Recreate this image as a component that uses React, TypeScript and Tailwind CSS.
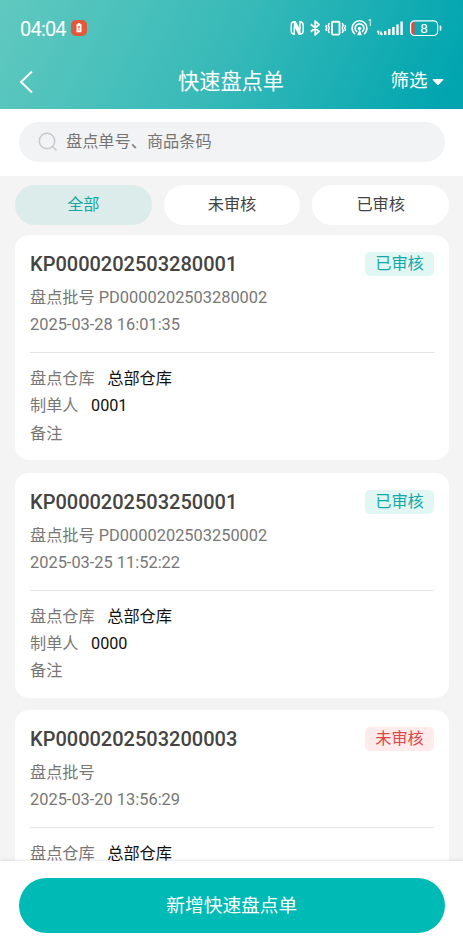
import React, { useState } from 'react';
import { clsx } from 'clsx';

type Order = {
  code: string;
  batch: string;
  createdAt: string;
  warehouse: string;
  creator: string;
  remark: string;
  approved: boolean;
};

const orders: Order[] = [
  {
    code: 'KP0000202503280001',
    batch: 'PD0000202503280002',
    createdAt: '2025-03-28 16:01:35',
    warehouse: '总部仓库',
    creator: '0001',
    remark: '',
    approved: true,
  },
  {
    code: 'KP0000202503250001',
    batch: 'PD0000202503250002',
    createdAt: '2025-03-25 11:52:22',
    warehouse: '总部仓库',
    creator: '0000',
    remark: '',
    approved: true,
  },
  {
    code: 'KP0000202503200003',
    batch: '',
    createdAt: '2025-03-20 13:56:29',
    warehouse: '总部仓库',
    creator: '0000',
    remark: '',
    approved: false,
  },
];

const tabs = ['全部', '未审核', '已审核'];

function StatusIcons() {
  return (
    <svg width="156" height="22" viewBox="0 0 156 22" fill="none" stroke="white">
      {/* NFC */}
      <path d="M4.200 4.700C2 4.900 1.200 6 1.200 8V14C1.200 16 2 17.100 4.200 17.300V9.500M10 12.500V4.700C12.300 4.900 13.100 6 13.100 8V14C13.100 16 12.300 17.100 10 17.300" strokeWidth="1.400" />
      <path d="M3.800 4H5.600L10.500 13V18H8.800L3.800 9Z" fill="white" stroke="none" />
      {/* Bluetooth */}
      <path d="M20.800 7.300L29 14.400L25.200 17.800V4.200L29 7.600L20.800 14.700" strokeWidth="1.800" strokeLinejoin="round" />
      {/* Vibrate */}
      <rect x="42" y="4.800" width="7.500" height="12.800" rx="1" strokeWidth="1.900" />
      <path d="M39.300 6L38.300 8.500L39.300 11L38.300 13.500L39.300 16M36.600 8L36 9.500L36.800 11L36 12.500L36.600 14M52.200 6L53.200 8.500L52.200 11L53.200 13.500L52.200 16M54.900 8L55.500 9.500L54.700 11L55.500 12.500L54.900 14" strokeWidth="1.500" />
      {/* Hotspot */}
      <path d="M64.500 16.600A7.400 7.400 0 1 1 74.500 16.600M66.500 14.400A4.400 4.400 0 1 1 72.500 14.400" strokeWidth="1.700" strokeLinecap="round" />
      <circle cx="69.500" cy="11.500" r="1.800" fill="white" stroke="none" />
      <path d="M69.500 12L71.800 18.300H67.200Z" fill="white" stroke="none" />
      <text x="77.500" y="9" fontSize="8.500" fill="white" stroke="none">1</text>
      {/* Signal */}
      <path d="M88.600 17.500V13.800M87.200 15.300L88.600 13.800M91 14.500V18M91 18L92.500 16.400" strokeWidth="1.400" />
      <path d="M95.200 18V14M99.300 18V12M103.400 18V10M107.500 18V7.500M111.600 18V4.500" strokeWidth="2.400" strokeLinecap="butt" />
      {/* Battery */}
      <path d="M124.500 4V18H123.500A2.800 2.800 0 0 1 121 15.200V7A2.800 2.800 0 0 1 123.500 4Z" fill="#e8473a" stroke="none" />
      <rect x="120.600" y="3.800" width="27" height="14.700" rx="4" strokeWidth="1.200" />
      <path d="M150.500 9.200V13" strokeWidth="1.600" strokeLinecap="round" />
      <text x="134" y="16" fontSize="13.500" textAnchor="middle" fill="white" stroke="none">8</text>
    </svg>
  );
}

function Header() {
  return (
    <header className="h-[109px] shrink-0 bg-[linear-gradient(115deg,#60c9bf_0%,#36b9b8_50%,#00a5b0_96%)] text-white">
      <div className="flex h-14 items-center justify-between pr-[17px] pl-5">
        <div className="flex items-center gap-[5px]">
          <span className="pt-px text-[20px] tracking-[-0.8px]">04:04</span>
          <svg width="16" height="16" viewBox="0 0 16 16">
            <rect width="16" height="16" rx="5" fill="#e4573b" />
            <path d="M6.800 3h2.400v1.200h1.300v8H5.500v-8h1.300z" fill="white" />
            <path d="M8 6v2.500M8 9.500v1" stroke="#e4573b" strokeWidth="1.300" />
          </svg>
        </div>
        <StatusIcons />
      </div>
      <div className="grid h-[52px] grid-cols-[1fr_auto_1fr] items-center pr-[19.5px] pl-[18.5px]">
        <svg width="14" height="24" viewBox="0 0 14 24" fill="none" stroke="white" strokeWidth="1.900">
          <path d="M13 1.500L2 12L13 22.500" />
        </svg>
        <h1 className="text-[21.2px]">快速盘点单</h1>
        <button className="flex items-center gap-1 justify-self-end text-[18.500px]">
          筛选
          <svg width="12" height="7" viewBox="0 0 12 7" fill="white">
            <path d="M1 0.500H11L6 6Z" stroke="white" strokeLinejoin="round" />
          </svg>
        </button>
      </div>
    </header>
  );
}

function Field({ label, value }: { label: string; value: string }) {
  return (
    <div className="flex gap-[12.5px]">
      <span className="text-[#777]">{label}</span>
      <span className="text-[#111]">{value}</span>
    </div>
  );
}

function OrderCard({ order }: { order: Order }) {
  return (
    <article className="h-[225px] shrink-0 rounded-[14px] bg-white px-[15px] pt-[15px] text-[16.2px] leading-[27.3px]">
      <div className="flex h-[28px] items-center justify-between">
        <h2 className="pt-[2px] text-[20px] font-medium text-[#444]">{order.code}</h2>
        <span
          className={clsx(
            'h-6 w-[69px] rounded-[5px] text-center leading-6',
            order.approved ? 'bg-[#e2f6f4] text-[#12aaa8]' : 'bg-[#ffebeb] text-[#dc4747]'
          )}
        >
          {order.approved ? '已审核' : '未审核'}
        </span>
      </div>
      <div className="mt-[6px] h-[69px] border-b border-[#e5e5e5] text-[#777]">
        <p>
          盘点批号 <span className="text-[16.4px]">{order.batch}</span>
        </p>
        <p className="text-[16.4px]">{order.createdAt}</p>
      </div>
      <div className="pt-[12px]">
        <Field label="盘点仓库" value={order.warehouse} />
        <Field label="制单人" value={order.creator} />
        <Field label="备注" value={order.remark} />
      </div>
    </article>
  );
}

export default function App() {
  const [activeTab, setActiveTab] = useState('全部');

  const displayedOrders = orders.filter(
    o => activeTab === '全部' || o.approved === (activeTab === '已审核')
  );

  return (
    <div className="flex h-[949px] w-[463px] flex-col overflow-hidden bg-[#f4f4f4] font-[Roboto,'Noto_Sans_CJK_SC',sans-serif]">
      <Header />

      {/* Search */}
      <div className="h-[67px] shrink-0 bg-white pt-[13px] pr-[18px] pl-[18.5px]">
        <label className="flex h-[40px] items-center gap-[8px] rounded-full bg-[#f2f3f5] pl-[19.5px]">
          <svg width="20" height="20" viewBox="0 0 20 20" fill="none" stroke="#c8c9cc" strokeWidth="1.500">
            <circle cx="9" cy="9" r="7.700" />
            <path d="M14.500 14.500L18.500 18.500" />
          </svg>
          <input
            className="w-80 text-[16.2px] outline-none placeholder:text-[#757575]"
            placeholder="盘点单号、商品条码"
          />
        </label>
      </div>

      {/* Tabs */}
      <div className="flex shrink-0 gap-[12px] pt-[9px] pr-[14px] pb-[10px] pl-[15px]">
        {tabs.map(tab => (
          <button
            key={tab}
            onClick={() => setActiveTab(tab)}
            className={clsx(
              'h-10 flex-1 rounded-full text-[16.2px]',
              activeTab === tab ? 'bg-[#dcecea] text-[#12a5a3]' : 'bg-white text-[#444]'
            )}
          >
            {tab}
          </button>
        ))}
      </div>

      {/* Orders */}
      <main className="flex min-h-0 flex-1 flex-col gap-[12.5px] overflow-hidden pr-[14px] pl-[15px]">
        {displayedOrders.map(order => (
          <OrderCard key={order.code} order={order} />
        ))}
      </main>

      <footer className="relative h-[88px] shrink-0 bg-white pt-[17px] pr-[18px] pl-[18.5px] shadow-[0_-1px_3px_rgba(0,0,0,0.1)]">
        <button className="h-[55px] w-full rounded-full bg-[#00bbb5] pt-px text-[18.7px] text-white">
          新增快速盘点单
        </button>
      </footer>
    </div>
  );
}
